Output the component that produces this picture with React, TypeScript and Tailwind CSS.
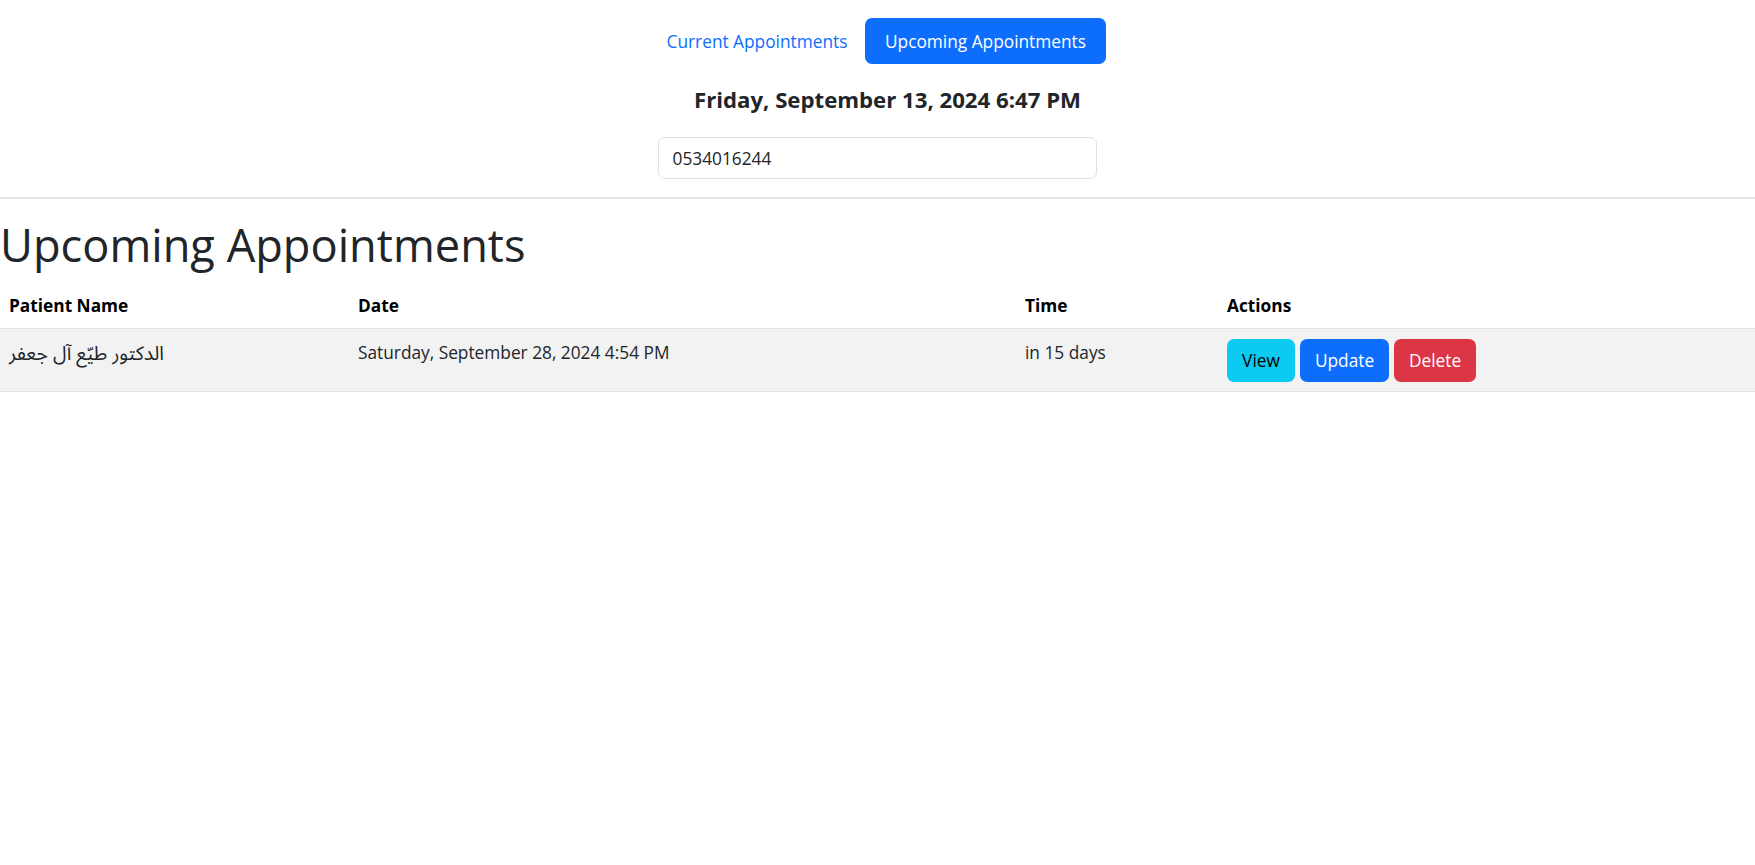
import { useState } from 'react';

interface Appointment {
  id: number;
  patientName: string;
  date: string;
  relative: string;
}

const appointments: Appointment[] = [
  {
    id: 1,
    patientName: 'الدكتور طيّع آل جعفر',
    date: 'Saturday, September 28, 2024 4:54 PM',
    relative: 'in 15 days',
  },
];

export default function App() {
  const [tab, setTab] = useState<'current' | 'upcoming'>('upcoming');
  const [phone, setPhone] = useState('0534016244');

  return (
    <div className="min-h-screen bg-white text-[#212529] font-['Open_Sans','Noto_Sans','Noto_Sans_Arabic','DejaVu_Sans',sans-serif] text-[17.3px] leading-[27px]">
      {/* Header */}
      <div className="flex flex-col items-center pt-[18px]">
        <nav className="flex items-center">
          <button
            onClick={() => setTab('current')}
            className={`h-[46px] w-[216px] rounded-[7px] ${
              tab === 'current' ? 'bg-[#0d6efd] text-white' : 'text-[#0d6efd]'
            }`}
          >
            Current Appointments
          </button>
          <button
            onClick={() => setTab('upcoming')}
            className={`h-[46px] w-[241px] rounded-[7px] ${
              tab === 'upcoming' ? 'bg-[#0d6efd] text-white' : 'text-[#0d6efd]'
            }`}
          >
            Upcoming Appointments
          </button>
        </nav>
        <h5 className="mt-[22px] pl-[20px] text-[22.2px] leading-[27px] font-bold">
          Friday, September 13, 2024 6:47 PM
        </h5>
        <input
          value={phone}
          onChange={(e) => setPhone(e.target.value)}
          className="mt-[24px] h-[42px] w-[439px] rounded-[7px] border border-[#dee2e6] px-[13.5px] text-[#212529] outline-none"
        />
      </div>

      <hr className="mt-[18px] border-t-2 border-[#e6e6e6]" />

      {/* Upcoming list */}
      <h1 className="mt-[18px] mb-[10px] text-[45.2px] leading-[56px] font-medium">Upcoming Appointments</h1>

      <table className="w-full table-fixed border-collapse">
        <colgroup>
          <col className="w-[349px]" />
          <col className="w-[667px]" />
          <col className="w-[202px]" />
          <col />
        </colgroup>
        <thead>
          <tr className="text-left text-black">
            <th className="px-[9px] pt-[10px] pb-[9px] leading-[26px] font-bold border-b border-[#dee2e6]">Patient Name</th>
            <th className="px-[9px] pt-[10px] pb-[9px] leading-[26px] font-bold border-b border-[#dee2e6]">Date</th>
            <th className="px-[9px] pt-[10px] pb-[9px] leading-[26px] font-bold border-b border-[#dee2e6]">Time</th>
            <th className="px-[9px] pt-[10px] pb-[9px] leading-[26px] font-bold border-b border-[#dee2e6]">Actions</th>
          </tr>
        </thead>
        <tbody>
          {appointments.map((a) => (
            <tr key={a.id} className="bg-[#f2f2f2] align-top">
              <td className="px-[9px] pt-[10px] pb-[9px] border-b border-[#dee2e6]">
                <span className="text-[19.5px]">{a.patientName}</span>
              </td>
              <td className="px-[9px] pt-[10px] pb-[9px] border-b border-[#dee2e6]">{a.date}</td>
              <td className="px-[9px] pt-[10px] pb-[9px] border-b border-[#dee2e6]">{a.relative}</td>
              <td className="px-[9px] pt-[10px] pb-[9px] border-b border-[#dee2e6]">
                <div className="flex gap-[5px]">
                  <button className="h-[43px] w-[68px] rounded-[7px] bg-[#0dcaf0] text-black">View</button>
                  <button className="h-[43px] w-[89px] rounded-[7px] bg-[#0d6efd] text-white">Update</button>
                  <button className="h-[43px] w-[82px] rounded-[7px] bg-[#dc3545] text-white">Delete</button>
                </div>
              </td>
            </tr>
          ))}
        </tbody>
      </table>
    </div>
  );
}
